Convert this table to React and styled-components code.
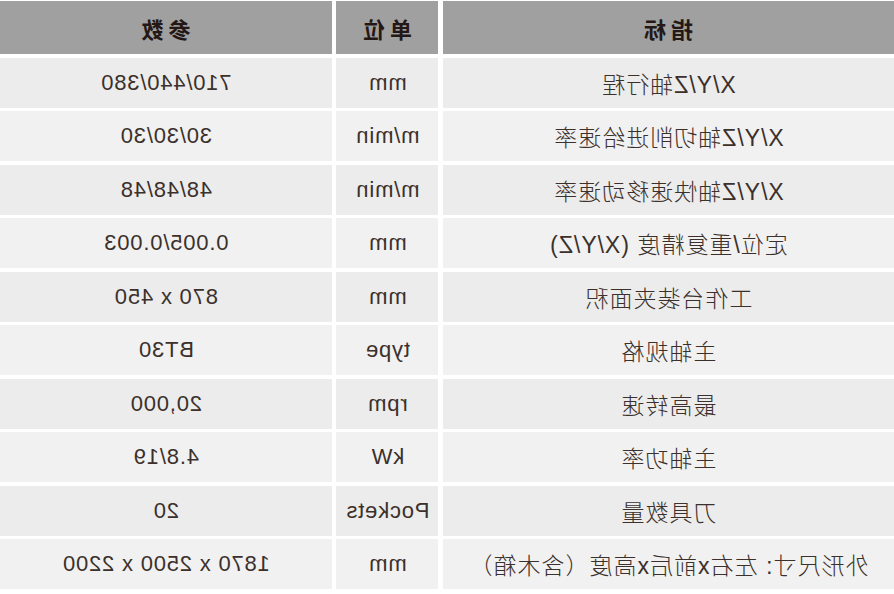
import styled, { createGlobalStyle } from "styled-components";

const GlobalStyle = createGlobalStyle`
  html, body {
    margin: 0;
    padding: 0;
    background: #fff;
  }
  body {
    font-family: "Liberation Sans", "Noto Sans CJK SC", sans-serif;
  }
`;

// the whole sheet is shown mirrored, like the photo of a print seen from behind
const Sheet = styled.div`
  width: 894px;
  height: 594px;
  box-sizing: border-box;
  padding-top: 1px;
  transform: scaleX(-1);
  display: grid;
  grid-template-columns: 451px 102px 332px;
  grid-template-rows: 53px repeat(10, 50px);
  column-gap: 4.5px;
  row-gap: 3.5px;
  background: #fff;
`;

const Head = styled.div`
  background: #a0a0a0;
  color: #231815;
  font-family: "Noto Sans CJK SC", sans-serif;
  font-weight: 700;
  font-size: 22px;
  letter-spacing: 5px;
  padding-left: 5px;
  display: flex;
  align-items: center;
  justify-content: center;
`;

const Cell = styled.div`
  background: ${(p) => (p.$odd ? "#ececec" : "#f1f1f1")};
  color: #3b302b;
  font-family: "Liberation Sans", "Noto Sans CJK SC", sans-serif;
  font-weight: 300;
  font-size: ${(p) => (p.$wide ? "23px" : "22px")};
  letter-spacing: ${(p) => (p.$wide ? "1px" : "0.8px")};
  display: flex;
  align-items: center;
  justify-content: center;
  white-space: nowrap;
`;

const rows = [
  ["X/Y/Z轴行程", "mm", "710/440/380"],
  ["X/Y/Z轴切削进给速率", "m/min", "30/30/30"],
  ["X/Y/Z轴快速移动速率", "m/min", "48/48/48"],
  ["定位/重复精度 (X/Y/Z)", "mm", "0.005/0.003"],
  ["工作台装夹面积", "mm", "870 x 450"],
  ["主轴规格", "type", "BT30"],
  ["最高转速", "rpm", "20,000"],
  ["主轴功率", "kW", "4.8/19"],
  ["刀具数量", "Pockets", "20"],
  ["外形尺寸: 左右x前后x高度（含木箱）", "mm", "1870 x 2500 x 2200"],
];

export default function App() {
  return (
    <>
      <GlobalStyle />
      <Sheet>
        <Head>指标</Head>
        <Head>单位</Head>
        <Head>参数</Head>
        {rows.map((r, i) =>
          r.map((t, j) => (
            <Cell key={i + "-" + j} $odd={i % 2 === 0} $wide={j === 0}>
              {t}
            </Cell>
          ))
        )}
      </Sheet>
    </>
  );
}
